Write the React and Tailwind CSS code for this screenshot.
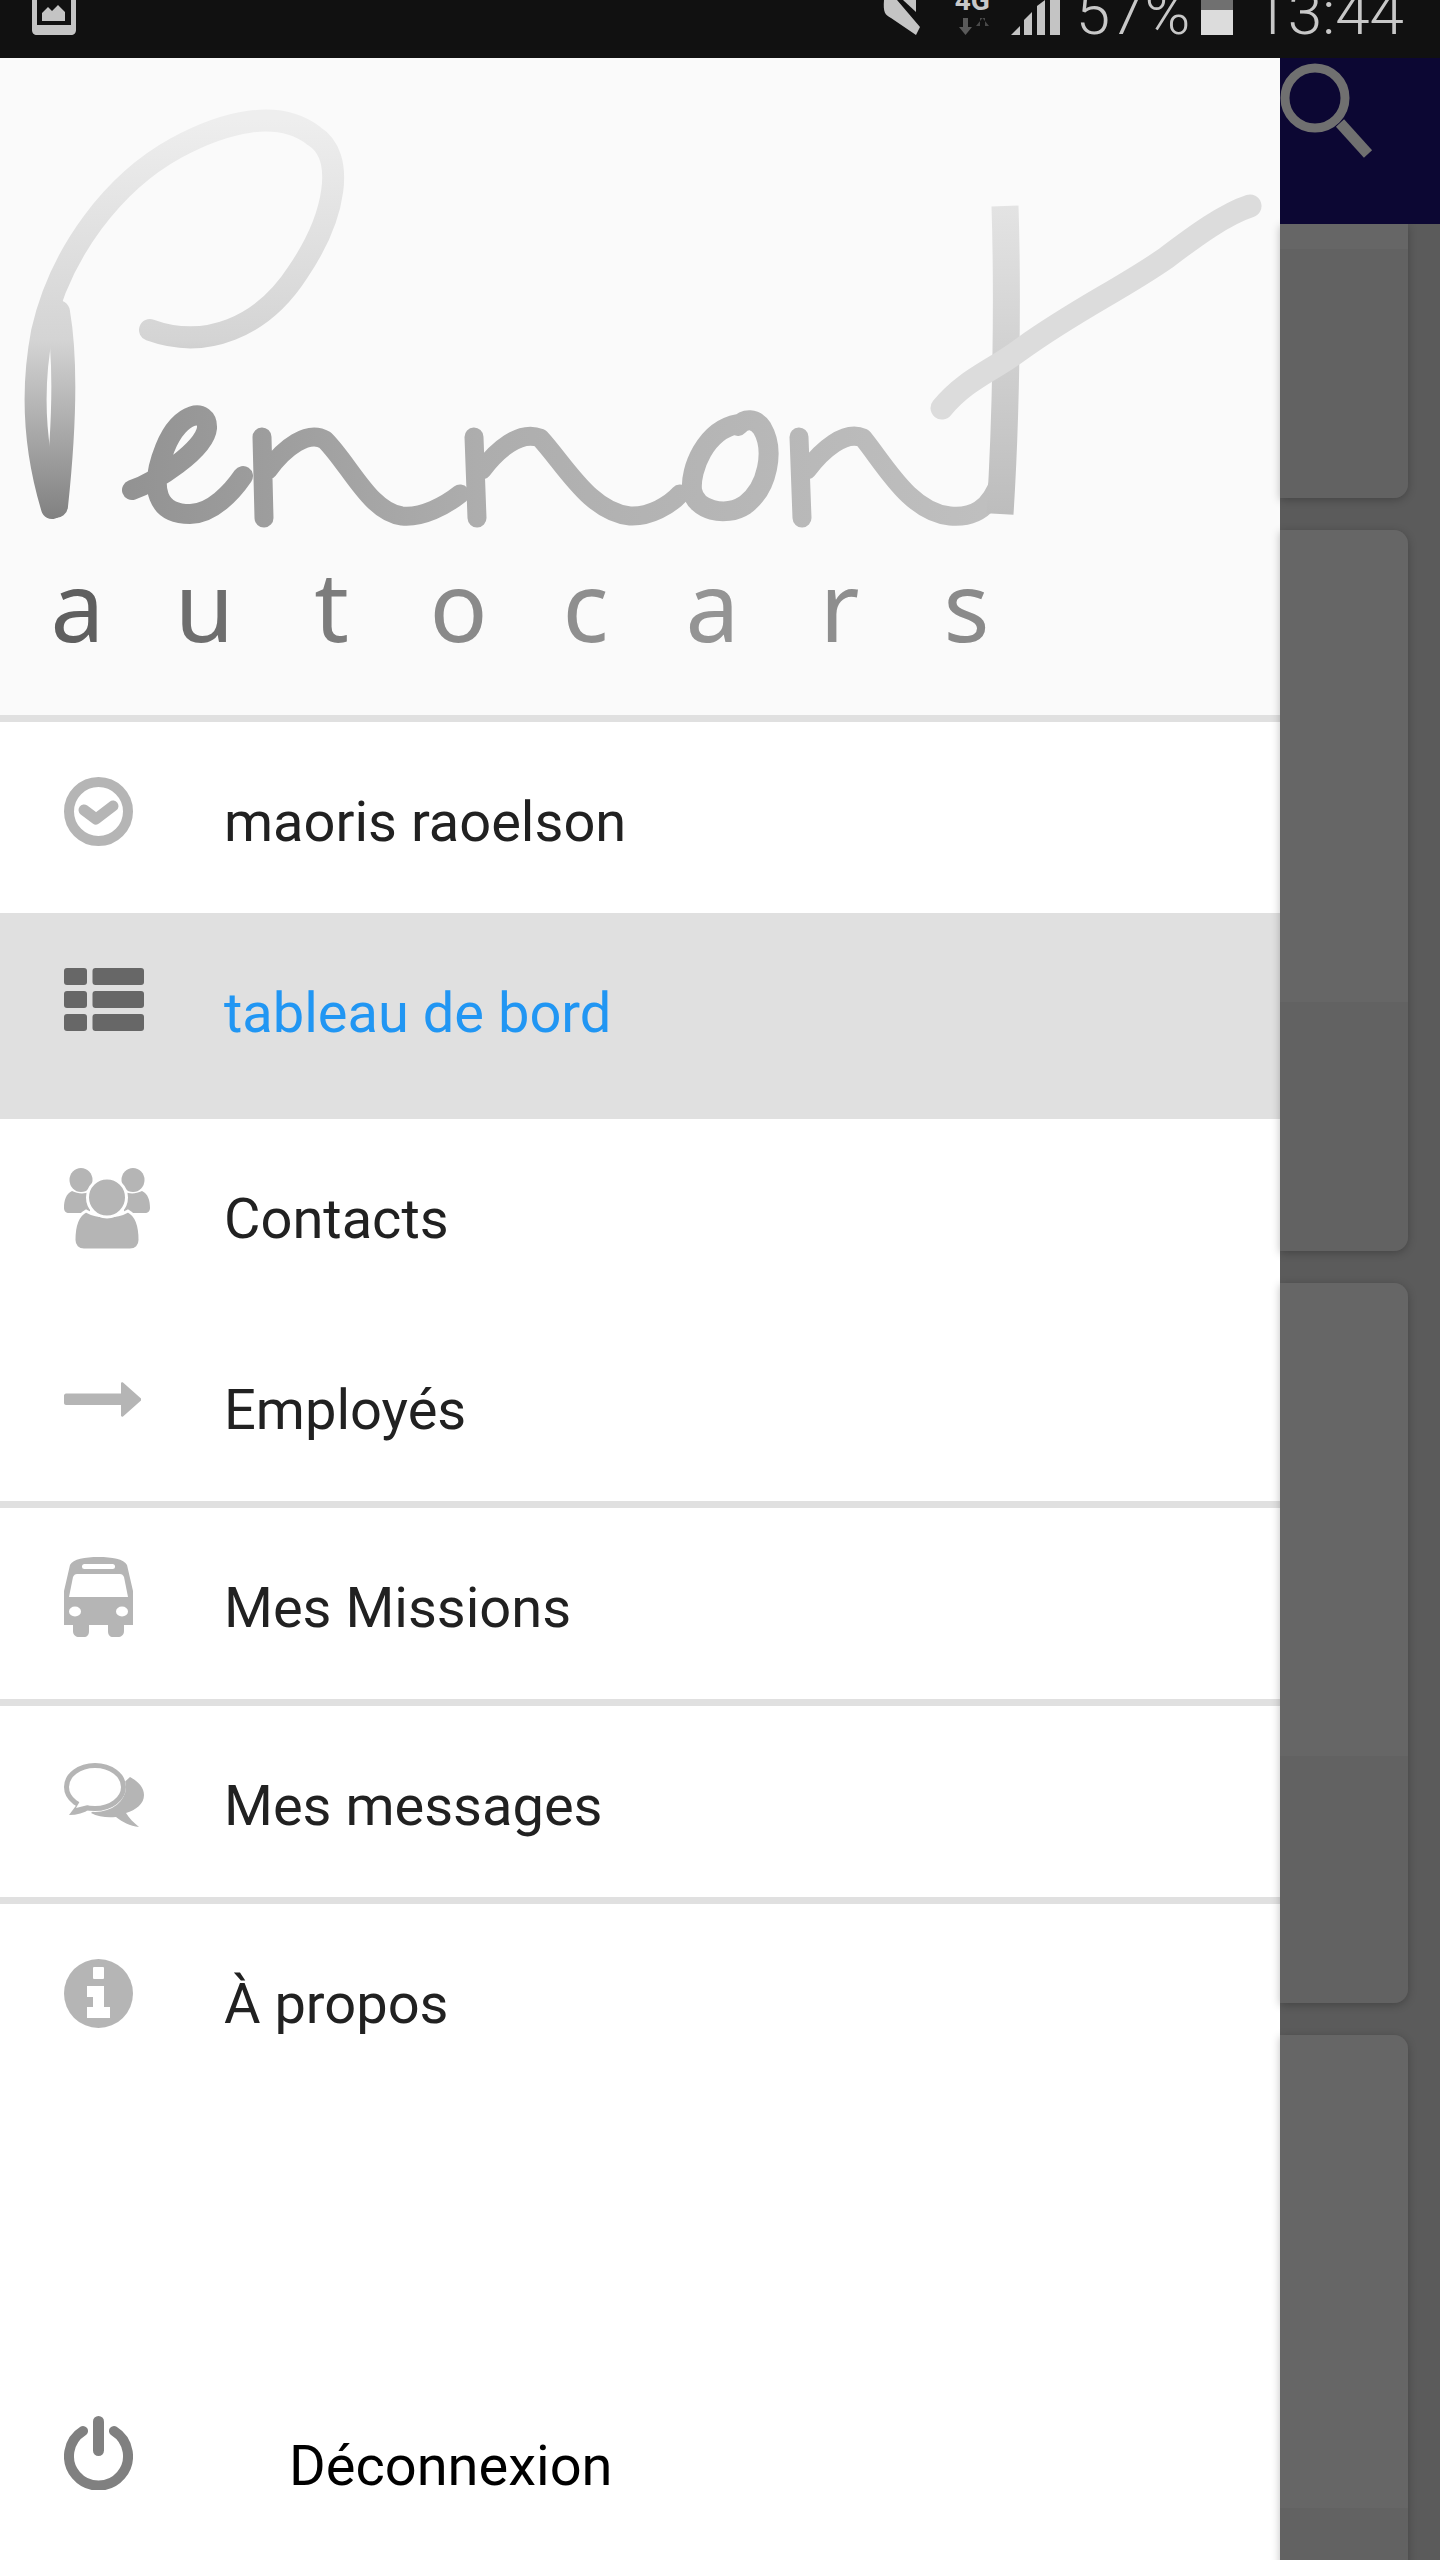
const LOGO_LETTERS = [
  ['a', 'text-[#5f5f5f]'],
  ['u', 'text-[#6e6e6e]'],
  ['t', 'text-[#7c7c7c]'],
  ['o', 'text-[#8a8a8a]'],
  ['c', 'text-[#8f8f8f]'],
  ['a', 'text-[#949494]'],
  ['r', 'text-[#8e8e8e]'],
  ['s', 'text-[#8a8a8a]'],
];

const CheckIcon = () => (
  <svg width="69" height="69" viewBox="0 0 69 69" fill="none">
    <circle cx="34.5" cy="34.5" r="29.5" stroke="#b5b5b5" strokeWidth="10" />
    <path d="M20 33L32 42L49 29" stroke="#b5b5b5" strokeWidth="11" strokeLinecap="round" strokeLinejoin="round" />
  </svg>
);

const ListIcon = () => (
  <svg width="80" height="63" viewBox="0 0 80 63" fill="#676767">
    <rect x="0" y="0" width="23" height="17" rx="3" />
    <rect x="28.5" y="0" width="51.5" height="17" rx="3" />
    <rect x="0" y="23" width="23" height="17" rx="3" />
    <rect x="28.5" y="23" width="51.5" height="17" rx="3" />
    <rect x="0" y="46" width="23" height="17" rx="3" />
    <rect x="28.5" y="46" width="51.5" height="17" rx="3" />
  </svg>
);

const UsersIcon = () => (
  <svg width="86" height="81" viewBox="0 0 86 81" fill="#b5b5b5">
    <ellipse cx="17" cy="12" rx="11.5" ry="12" />
    <ellipse cx="69" cy="12" rx="11.5" ry="12" />
    <path d="M8 23C14 26 20 26 26 24L26 45H5C2 45 0 43 0 40C0 32 2 26 8 23Z" />
    <path d="M78 23C72 26 66 26 60 24L60 45H81C84 45 86 43 86 40C86 32 84 26 78 23Z" />
    <path d="M22 43C34 50 52 50 64 43C72 47 76 56 76 72C76 78 72 82 66 82H20C14 82 10 78 10 72C10 56 14 47 22 43Z" stroke="#fff" strokeWidth="3" />
    <circle cx="43" cy="29.5" r="19.5" stroke="#fff" strokeWidth="3" />
  </svg>
);

const ArrowIcon = () => (
  <svg width="77" height="35" viewBox="0 0 77 35" fill="#b5b5b5">
    <path d="M2 11.5H57V1.5C57 0.5 58 0 59 0.5L77 16.5C77.5 17 77.5 18 77 18.5L59 34.5C58 35 57 34.5 57 33.5V23H2C1 23 0 22 0 21V13.5C0 12.5 1 11.5 2 11.5Z" />
  </svg>
);

const BusIcon = () => (
  <svg width="69" height="80" viewBox="0 0 69 80" fill="#b5b5b5">
    <path d="M34.5 0C48 0 60 2 63 8L69 34V68H60V74C60 78 57 80 54 80H49C46 80 44 78 44 74V68H25V74C25 78 23 80 20 80H15C12 80 9 78 9 74V68H0V34L6 8C9 2 21 0 34.5 0Z" />
    <rect x="18" y="7" width="33" height="5" rx="2.5" fill="#fff" />
    <path d="M13 17H56C58 17 59 18 60 20L64 40H5L9 20C10 18 11 17 13 17Z" fill="#fff" />
    <ellipse cx="11" cy="54.5" rx="6" ry="5" fill="#fff" />
    <ellipse cx="58" cy="54.5" rx="6" ry="5" fill="#fff" />
  </svg>
);

const CommentsIcon = () => (
  <svg width="80" height="64" viewBox="0 0 80 64">
    <path d="M66 14C75 19 80 25 80 32C80 41 72 47 62 50C65 55 70 60 75 64C66 63 58 59 52 54C44 55 34 54 27 50Z" fill="#b5b5b5" />
    <ellipse cx="31" cy="24" rx="31" ry="25" fill="#fff" />
    <path d="M14 40L5 52C13 52 20 50 26 46Z" fill="#b5b5b5" />
    <ellipse cx="31" cy="24" rx="28.5" ry="21.5" fill="#fff" stroke="#b5b5b5" strokeWidth="5" />
    <path d="M16 38L12 45L24 42Z" fill="#fff" />
  </svg>
);

const InfoIcon = () => (
  <svg width="69" height="69" viewBox="0 0 69 69">
    <circle cx="34.5" cy="34.5" r="34.5" fill="#b5b5b5" />
    <rect x="29" y="8" width="11" height="12" rx="1" fill="#fff" />
    <path d="M23 27H40V48H46V59H23V48H29V38H23Z" fill="#fff" />
  </svg>
);

const PowerIcon = () => (
  <svg width="69" height="74" viewBox="0 0 69 74" fill="none">
    <path d="M19 15A29.5 29.5 0 1 0 50 15" stroke="#808080" strokeWidth="10" strokeLinecap="round" />
    <rect x="29" y="0" width="11" height="40" rx="5.5" fill="#808080" />
  </svg>
);

// hand drawn part of the logo, the word under it stays real text
const LogoMark = () => (
  <svg width="1280" height="520" viewBox="0 58 1280 520" fill="none" strokeLinecap="round" strokeLinejoin="round">
    <defs>
      <linearGradient id="stem" gradientUnits="userSpaceOnUse" x1="0" y1="120" x2="0" y2="520">
        <stop offset="0" stopColor="#eeeeee" />
        <stop offset="0.55" stopColor="#d4d4d4" />
        <stop offset="1" stopColor="#808080" />
      </linearGradient>
      <linearGradient id="word" gradientUnits="userSpaceOnUse" x1="120" y1="0" x2="1010" y2="0">
        <stop offset="0" stopColor="#929292" />
        <stop offset="0.4" stopColor="#adadad" />
        <stop offset="1" stopColor="#c0c0c0" />
      </linearGradient>
      <linearGradient id="bar" gradientUnits="userSpaceOnUse" x1="0" y1="200" x2="0" y2="520">
        <stop offset="0" stopColor="#e4e4e4" />
        <stop offset="1" stopColor="#bcbcbc" />
      </linearGradient>
    </defs>
    <path d="M150 330C205 350 262 328 298 272C336 216 346 156 314 136C278 108 224 122 176 148C114 182 60 252 42 332C30 395 36 455 52 508" stroke="url(#stem)" strokeWidth="22" />
    <path d="M58 312C68 370 62 450 56 506" stroke="url(#stem)" strokeWidth="24" />
    <path d="M132 490C155 482 205 450 207 428C208 408 180 410 165 448C148 490 158 514 190 514C212 514 232 492 243 476" stroke="url(#word)" strokeWidth="20" />
    <path d="M262 437L264 518M268 470C285 447 308 430 325 440C350 465 370 512 402 516C422 518 445 506 460 494" stroke="url(#word)" strokeWidth="19" />
    <path d="M474 437L477 518M482 470C497 450 520 430 540 438C565 465 590 512 630 516C650 517 670 505 680 494" stroke="url(#word)" strokeWidth="19" />
    <path d="M738 424C705 430 690 470 692 490C695 510 725 518 745 505C768 488 775 450 762 428C755 418 745 418 738 426" stroke="url(#word)" strokeWidth="20" />
    <path d="M799 437L802 518M807 470C822 450 845 430 863 438C885 465 910 512 950 516C972 518 990 510 1000 480" stroke="url(#word)" strokeWidth="19" />
    <path d="M1005 206C1008 300 1006 420 1000 514" stroke="url(#bar)" strokeWidth="27" strokeLinecap="butt" />
    <path d="M942 408C965 380 990 372 1020 350C1075 310 1120 290 1166 258C1195 236 1225 214 1250 206" stroke="#dcdcdc" strokeWidth="23" />
  </svg>
);

const MENU = [
  [
    { label: 'maoris raoelson', Icon: CheckIcon },
    { label: 'tableau de bord', Icon: ListIcon, active: true },
    { label: 'Contacts', Icon: UsersIcon },
    { label: 'Employés', Icon: ArrowIcon },
  ],
  [{ label: 'Mes Missions', Icon: BusIcon }],
  [{ label: 'Mes messages', Icon: CommentsIcon }],
  [{ label: 'À propos', Icon: InfoIcon }],
];

const StatusBar = () => (
  <div className="flex h-[58px] items-start overflow-hidden bg-[#111111] text-[#c8c8c8]">
    <svg className="ml-[32px]" width="44" height="35" viewBox="0 0 44 35" fill="#c4c4c4">
      <path d="M0 0H5V25H39V0H44V30C44 33 42 35 39 35H5C2 35 0 33 0 30Z" />
      <path d="M10 21V13L16 7L20 11L26 5L33 12V21Z" />
    </svg>
    <div className="ml-auto flex items-start pr-[36px]">
      <svg width="40" height="35" viewBox="0 0 40 35" fill="#c4c4c4">
        <path d="M1 0H14L37 27L33 35L8 18C2 15 0 12 1 0Z" />
        <path d="M20 0H33V12Z" />
      </svg>
      <div className="relative ml-[32px] h-[35px] w-[38px]">
        <span className="absolute -top-[13px] left-0 font-['Roboto',sans-serif] text-[28px] leading-[28px] font-bold">4G</span>
        <svg className="absolute top-[18px] left-[4px]" width="30" height="17" viewBox="0 0 30 17">
          <path d="M4 0H9V9H13L6.5 17L0 9H4Z" fill="#5a5a5a" />
          <path d="M21 8H26V0H21ZM17 8L23.5 0L30 8Z" fill="#4a4a4a" />
        </svg>
      </div>
      <svg className="ml-[18px]" width="49" height="35" viewBox="0 0 49 35" fill="#c4c4c4">
        <path d="M0 35L9 26V35Z" />
        <path d="M13 20L21 12V35H13Z" />
        <path d="M26 6L34 0V35H26Z" />
        <path d="M39 0H49V35H39Z" />
      </svg>
      <span className="-mt-[18px] ml-[16px] font-['Roboto',sans-serif] text-[62px] leading-none font-light">57%</span>
      <div className="ml-[11px] flex h-[35px] w-[32px] flex-col">
        <div className="h-[10px] bg-[#707070]" />
        <div className="flex-1 bg-[#dcdcdc]" />
      </div>
      <span className="-mt-[18px] ml-[20px] font-['Roboto',sans-serif] text-[62px] leading-none font-light">13:44</span>
    </div>
  </div>
);

const MenuRow = ({ label, Icon, active }) => (
  <div className={active ? 'flex h-[206px] items-center bg-[#e0e0e0] pb-[15px]' : 'flex h-[191px] items-center'}>
    <div className={active ? 'mb-[18px] w-[224px] pl-[64px]' : 'mb-[13px] w-[224px] pl-[64px]'}>
      <Icon />
    </div>
    <span className={active ? 'mt-[8px] text-[56px] leading-none text-[#2196f3]' : 'mt-[8px] text-[56px] leading-none text-[#212121]'}>{label}</span>
  </div>
);

const Card = ({ light, dark, first }) => (
  <div className={first ? 'flex w-full flex-col overflow-hidden rounded-br-[14px] shadow-[0_2px_8px_rgba(0,0,0,0.25)]' : 'flex w-full shrink-0 flex-col overflow-hidden rounded-r-[14px] shadow-[0_2px_8px_rgba(0,0,0,0.25)]'}>
    <div className={light} />
    <div className={dark} />
  </div>
);

const App = () => (
  <div className="flex h-[2560px] w-[1440px] flex-col overflow-hidden bg-[#5b5b5b] font-['Roboto',sans-serif]">
    <StatusBar />
    <div className="flex flex-1 overflow-hidden">
      <aside className="flex w-[1280px] shrink-0 flex-col bg-white">
        <header className="h-[657px] overflow-hidden bg-[#fafafa]">
          <LogoMark />
          <div className="grid grid-cols-8 pl-[14px] w-[1030px]">
            {LOGO_LETTERS.map(([letter, color], i) => (
              <span key={i} className={`-mt-[21px] text-center font-['Noto_Sans',sans-serif] text-[96px] leading-[96px] font-normal ${color}`}>{letter}</span>
            ))}
          </div>
        </header>
        {MENU.map((group, i) => (
          <div key={i} className="border-t-[7px] border-[#e0e0e0]">
            {group.map((item) => (
              <MenuRow key={item.label} {...item} />
            ))}
          </div>
        ))}
        <div className="mt-auto flex h-[160px] items-start pt-[16px]">
          <div className="w-[289px] pl-[64px]">
            <PowerIcon />
          </div>
          <span className="mt-[22px] text-[56px] leading-none text-black">Déconnexion</span>
        </div>
      </aside>
      <div className="flex min-w-0 flex-1 flex-col">
        <div className="relative h-[166px] shrink-0 bg-[#0c0733]">
          <svg className="absolute top-[3px] left-0" width="100" height="100" viewBox="0 0 100 100" fill="none" stroke="#707070">
            <circle cx="35" cy="37" r="30" strokeWidth="9" />
            <path d="M60 62L88 93" strokeWidth="11" />
          </svg>
        </div>
        <div className="flex flex-col gap-[32px] pr-[32px]">
          <Card first light="h-[25px] bg-[#666666]" dark="h-[249px] bg-[#626262]" />
          <Card light="h-[472px] bg-[#666666]" dark="h-[249px] bg-[#626262]" />
          <Card light="h-[473px] bg-[#666666]" dark="h-[247px] bg-[#626262]" />
          <Card light="h-[473px] bg-[#666666]" dark="h-[248px] bg-[#626262]" />
        </div>
      </div>
    </div>
  </div>
);

export default App;
